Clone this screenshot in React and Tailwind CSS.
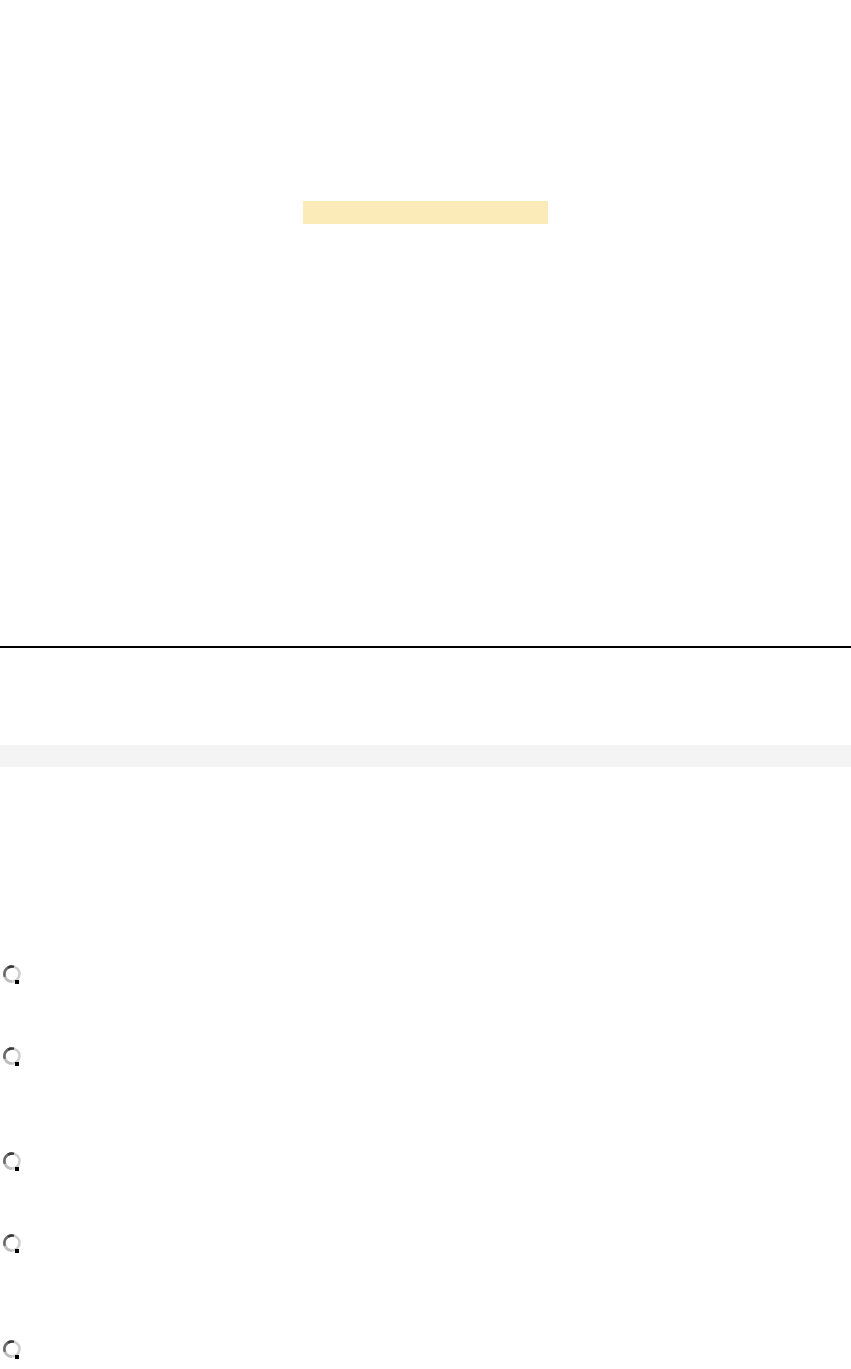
import React from "react";

function Radio() {
  return (
    <svg width="20" height="22" viewBox="0 0 20 22" className="block">
      <circle cx="10" cy="11" r="7.5" fill="#fff" stroke="#cfcfcf" strokeWidth="2.6" />
      <path d="M10 3.5 A7.5 7.5 0 0 0 3 14" fill="none" stroke="#6a6a6a" strokeWidth="2.6" />
      <path d="M6 4.6 A7.5 7.5 0 0 1 12 3.8" fill="none" stroke="#3a3a3a" strokeWidth="2.6" />
      <path d="M3 14 A7.5 7.5 0 0 0 10 18.5" fill="none" stroke="#bdbdbd" strokeWidth="2.6" />
      <rect x="13" y="17" width="4" height="4" fill="#000" />
    </svg>
  );
}

export default function App() {
  const gaps = ["mt-[196px]", "mt-[60px]", "mt-[83px]", "mt-[60px]", "mt-[84px]"];
  return (
    <div className="w-[851px] h-[1369px] bg-white overflow-hidden" style={{ fontFamily: "'Liberation Sans', Arial, sans-serif" }}>
      <div className="pt-[201px]">
        <div className="ml-[303px] w-[245px] h-[23px] bg-[#faebb8]" />
      </div>
      <div className="mt-[422px] h-[2px] bg-black" />
      <div className="mt-[97px] h-[22px] bg-[#f4f4f4]" />
      <div className="flex flex-col pl-[2px]">
        <div className={gaps[0]}><Radio /></div>
        <div className={gaps[1]}><Radio /></div>
        <div className={gaps[2]}><Radio /></div>
        <div className={gaps[3]}><Radio /></div>
        <div className={gaps[4]}><Radio /></div>
      </div>
    </div>
  );
}
